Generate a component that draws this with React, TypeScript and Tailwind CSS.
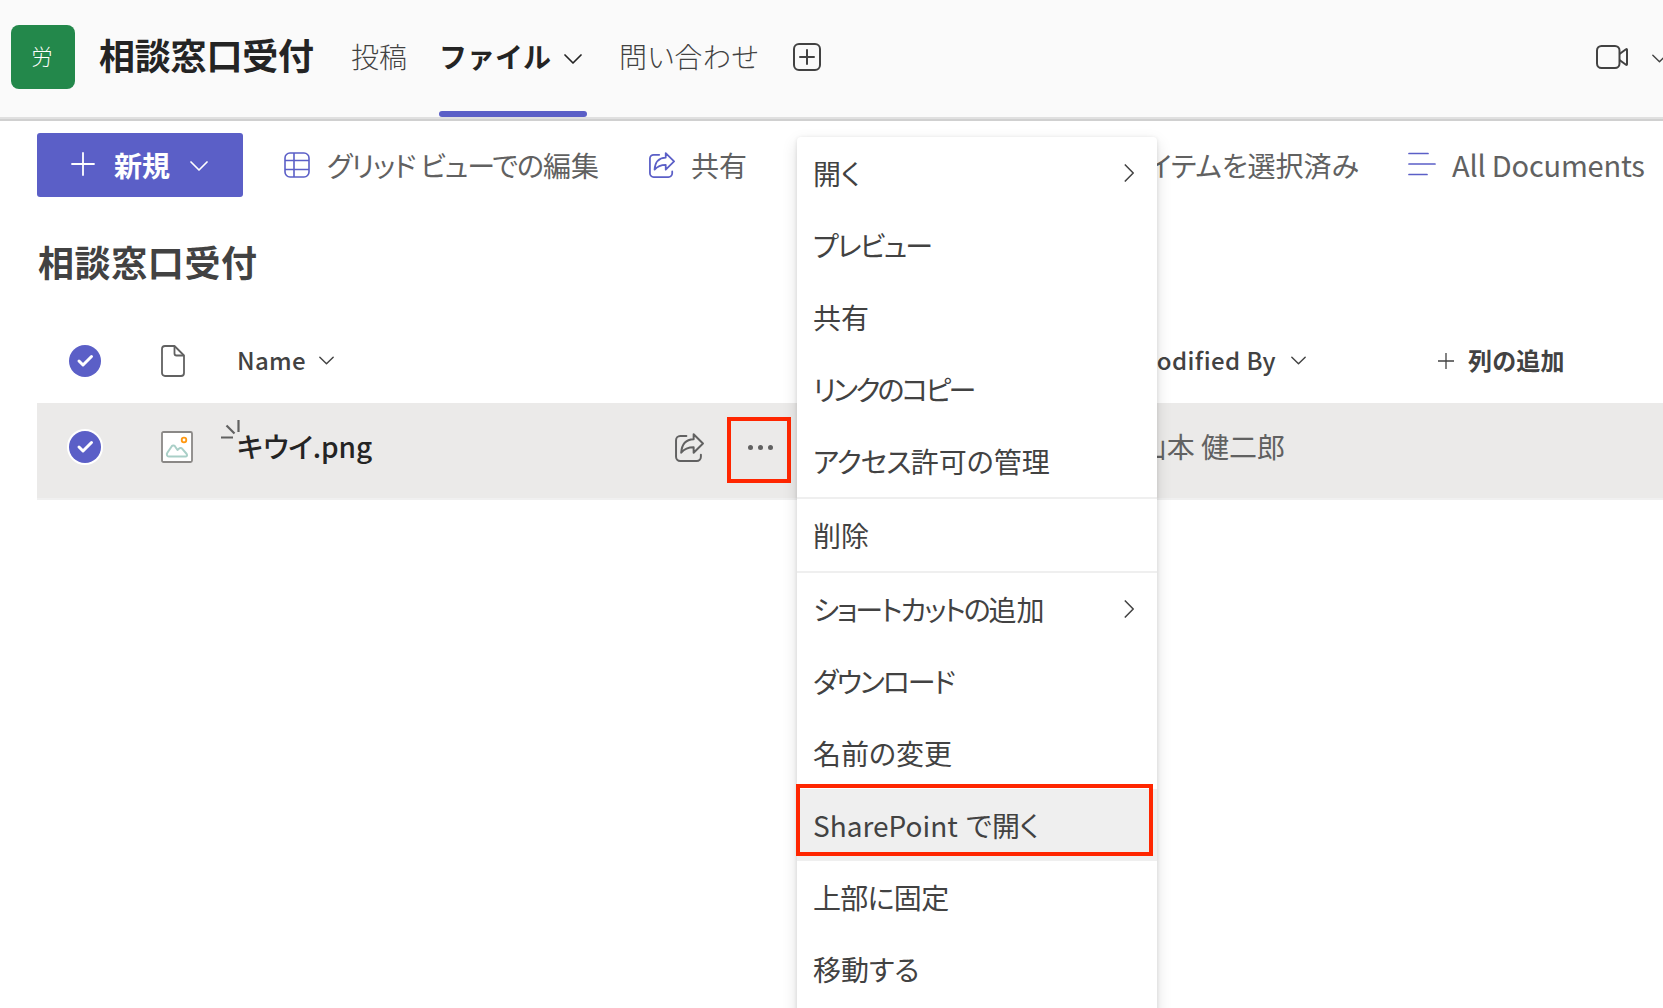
import React from 'react';

interface IconProps {
  className?: string;
}

const ChevronDown: React.FC<IconProps> = ({ className = '' }) => (
  <svg viewBox="0 0 18 10" fill="none" stroke="currentColor" className={className}>
    <path d="M1 1l8 8 8-8" strokeWidth={1.7} strokeLinecap="round" strokeLinejoin="round" />
  </svg>
);

const ShareIcon: React.FC<IconProps> = ({ className = '' }) => (
  <svg
    viewBox="0 0 28 28"
    fill="none"
    stroke="currentColor"
    strokeWidth={1.9}
    strokeLinecap="round"
    strokeLinejoin="round"
    className={className}
  >
    <path d="M11 3H5a4 4 0 0 0-4 4v16a4 4 0 0 0 4 4h16a4 4 0 0 0 4-4v-2" />
    <path d="M18 1.200v4.800C11 6.300 6.500 10.500 6 19c3.500-4.200 7-5.200 12-5.200v5.200l9-8.900z" />
  </svg>
);

const CheckCircle: React.FC<{ ring?: boolean }> = ({ ring }) => (
  <svg viewBox="0 0 36 36" className="w-9 h-9">
    {ring && <circle cx="18" cy="18" r="18" fill="#fff" />}
    <circle cx="18" cy="18" r="16" fill="#5b5fc7" />
    <path d="M12 18l4 4 8.500-8.500" fill="none" stroke="#fff" strokeWidth={3} strokeLinecap="round" strokeLinejoin="round" />
  </svg>
);

interface MenuItemProps {
  children: React.ReactNode;
  submenu?: boolean;
  active?: boolean;
}

const MenuItem: React.FC<MenuItemProps> = ({ children, submenu, active }) => (
  <div className={`flex items-center justify-between h-[72px] pl-4 pr-[23px] ${active ? 'bg-[#efefef]' : ''}`}>
    <span className="text-[28px] leading-9 whitespace-nowrap">{children}</span>
    {submenu && (
      <svg viewBox="0 0 10 18" fill="none" stroke="currentColor" strokeWidth={1.5} className="w-[10px] h-[18px]">
        <path d="M.8.500L9.200 9 .8 17.500" />
      </svg>
    )}
  </div>
);

const Divider = () => <div className="h-0.5 bg-[#efefef]" />;

export default function App() {
  return (
    <div className="relative w-[1663px] h-[1008px] overflow-hidden bg-white text-[#424242] font-['Noto_Sans_CJK_JP',sans-serif] [font-feature-settings:'palt']">
      {/* Channel header */}
      <header className="flex items-center h-[121px] bg-[#fafafa] pl-[11px] border-b-2 border-[#d0d0d0] shadow-[inset_0_-2px_0_#e0e0e0] [&>*]:shrink-0">
        <div className="flex items-center justify-center w-16 h-16 mb-[5px] pb-[2px] pr-[2px] rounded-lg bg-[#23884b] text-white text-[21px] font-light">
          労
        </div>
        <h1 className="w-[252px] ml-6 mb-[11px] text-[36px] leading-[48px] font-bold tracking-[-0.2px] text-[#242424] whitespace-nowrap">相談窓口受付</h1>
        <span className="w-[88px] mb-[7px] text-[28px] leading-9 font-light whitespace-nowrap">投稿</span>
        <div className="relative flex items-center justify-between w-[148px] h-[119px] pb-[5px] pr-[5px] text-[#242424]">
          <span className="mb-[2px] text-[28px] leading-9 font-bold whitespace-nowrap [font-feature-settings:normal]">ファイル</span>
          <ChevronDown className="w-[18px] h-[10px] mt-[3px]" />
          <div className="absolute left-0 bottom-[2px] w-full h-[6px] rounded-full bg-[#5b5fc7]" />
        </div>
        <span className="w-[174px] ml-8 mb-[7px] text-[28px] leading-9 font-light tracking-[0.4px] whitespace-nowrap">問い合わせ</span>
        <svg viewBox="0 0 28 28" fill="none" stroke="currentColor" strokeWidth={2} strokeLinecap="round" className="w-7 h-7 mb-[5px]">
          <rect x="1" y="1" width="26" height="26" rx="5" />
          <path d="M14 7v14M7 14h14" />
        </svg>
        <svg viewBox="0 0 32 24" fill="none" stroke="currentColor" strokeWidth={2} strokeLinejoin="round" className="w-8 h-6 ml-[775px] mb-[5px]">
          <rect x="1" y="1" width="22.500" height="22" rx="4.500" />
          <path d="M23.500 9L30 4.200c.5-.4 1-.2 1 .5v14.600c0 .7-.5.900-1 .5L23.500 15" />
        </svg>
        <ChevronDown className="w-[15px] h-[9px] ml-6 mb-[2px]" />
      </header>

      {/* Command bar */}
      <div className="flex items-center h-16 mt-3 pl-[37px] text-[28px] leading-9 text-[#616161] whitespace-nowrap [&>*]:shrink-0">
        <button className="flex items-center w-[206px] h-16 rounded-[3px] bg-[#5b5fc7] text-white font-bold pl-[34px]">
          <svg viewBox="0 0 24 24" stroke="currentColor" strokeWidth={1.8} strokeLinecap="round" className="w-6 h-6 mb-[2px]">
            <path d="M12 1v22M1 12h22" />
          </svg>
          <span className="w-[76px] ml-[19px] text-left">新規</span>
          <ChevronDown className="w-[18px] h-[10px] mt-[2px]" />
        </button>
        <svg viewBox="0 0 26 26" fill="none" stroke="#5b5fc7" strokeWidth={1.6} className="w-[26px] h-[26px] ml-[41px]">
          <rect x="1" y="1" width="24" height="24" rx="5" />
          <path d="M10 1v24M1 8.500h24M1 17.500h24" />
        </svg>
        <span className="w-[322px] ml-[17px]">
          <span className="tracking-[-1.1px]">グリッド ビューでの</span>編集
        </span>
        <ShareIcon className="w-[26px] h-[26px] text-[#5b5fc7]" />
        <span className="ml-4 w-[60px]">共有</span>
        <span className="w-[608px] text-right">1 個のアイテムを選択済み</span>
        <svg viewBox="0 0 28 24" stroke="#5b5fc7" strokeWidth={1.7} strokeLinecap="round" className="w-7 h-6 ml-[49px] mb-[3px]">
          <path d="M1 1.500h19M1 12h26M1 22.500h18" />
        </svg>
        <span className="ml-4 mb-[3px] text-[29px] tracking-[-0.2px]">All Documents</span>
      </div>

      <h2 className="mt-[40px] ml-[38px] text-[36px] leading-[48px] font-bold tracking-[0.6px]">相談窓口受付</h2>

      {/* File list */}
      <div className="ml-[37px] mt-[34px] whitespace-nowrap">
        <div className="flex items-center h-[84px] pb-px pl-[30px] text-[24px] leading-8 font-medium [&>*]:shrink-0">
          <CheckCircle />
          <svg viewBox="0 0 24 32" fill="none" stroke="#616161" strokeWidth={1.8} strokeLinejoin="round" className="w-6 h-8 ml-[58px]">
            <path d="M4 1h9.500L23 10.500V28a3 3 0 0 1-3 3H4a3 3 0 0 1-3-3V4a3 3 0 0 1 3-3z" />
            <path d="M13.500 1v7.500a2 2 0 0 0 2 2H23" />
          </svg>
          <span className="w-[82px] ml-[52px] mb-px tracking-[0.3px]">Name</span>
          <ChevronDown className="w-[15px] h-[9px]" />
          <span className="w-[942px] mb-px text-right tracking-[0.45px]">Modified By</span>
          <ChevronDown className="w-[15px] h-[9px] ml-[15px]" />
          <svg viewBox="0 0 16 16" stroke="currentColor" strokeWidth={1.3} className="w-4 h-4 ml-[132px]">
            <path d="M8 0v16M0 8h16" />
          </svg>
          <span className="ml-[14px] mb-px font-bold tracking-[0.3px]">列の追加</span>
        </div>
        <div className="relative flex items-center h-[97px] pl-[30px] pb-[8px] bg-[#ebeae9] border-b-2 border-[#f0f0f0] text-[28px] leading-9 [&>*]:shrink-0">
          <CheckCircle ring />
          <svg viewBox="0 0 32 32" fill="none" className="w-8 h-8 ml-[58px]">
            <rect x="1" y="1" width="30" height="30" rx="1.500" fill="#fff" stroke="#8a8886" strokeWidth={1.8} />
            <circle cx="23" cy="9" r="2.300" stroke="#ff9810" strokeWidth={1.8} />
            <path d="M6.500 21.500l4.300-6.300c.8-1.100 2.300-1.100 3.100 0l2.600 3.800 1.600-1.500c.9-.9 2.300-.7 3 .2l4.600 5.300c.9 1.200.1 2.500-1.200 2.500H7.800c-1.700 0-2.700-2-1.300-4z" stroke="#a9cfc7" strokeWidth={2} strokeLinejoin="round" />
          </svg>
          <span className="w-[438px] ml-11 mb-px font-medium tracking-[-0.1px] text-[#242424]">キウイ.png</span>
          <ShareIcon className="w-[29px] h-[29px] mt-[2px] text-[#616161]" />
          <div className="flex items-center justify-center gap-[5px] w-16 h-[66px] ml-[23px] mt-[6px] pb-1 pl-[3px] border-4 border-[#ff2600]">
            <i className="w-[5px] h-[5px] rounded-full bg-[#616161]" />
            <i className="w-[5px] h-[5px] rounded-full bg-[#616161]" />
            <i className="w-[5px] h-[5px] rounded-full bg-[#616161]" />
          </div>
          <span className="w-[494px] mb-px text-right text-[#616161]">山本 健二郎</span>
          {/* "new" sparkle at the corner of the file name */}
          <svg viewBox="0 0 20 20" stroke="#616161" strokeWidth={2.200} className="absolute left-[184px] top-[17px] w-5 h-5">
            <path d="M17.500 0v12M5.500 5.500l8 8M0 17.500h12" />
          </svg>
        </div>
      </div>

      {/* Context menu */}
      <div className="absolute left-[797px] top-[137px] w-[360px] h-[900px] rounded-[4px] bg-white shadow-[0_6px_16px_rgba(0,0,0,0.13),0_1px_4px_rgba(0,0,0,0.11)]">
        <MenuItem submenu>開く</MenuItem>
        <MenuItem>
          <span className="tracking-[-1.8px]">プレビュー</span>
        </MenuItem>
        <MenuItem>共有</MenuItem>
        <MenuItem>
          <span className="tracking-[-2.8px]">リンクのコピー</span>
        </MenuItem>
        <MenuItem>
          <span className="tracking-[-1px]">アクセス</span>許可の管理
        </MenuItem>
        <Divider />
        <MenuItem>削除</MenuItem>
        <Divider />
        <MenuItem submenu>
          <span className="tracking-[-2.1px]">ショートカットの</span>追加
        </MenuItem>
        <MenuItem>
          <span className="tracking-[-2px]">ダウンロード</span>
        </MenuItem>
        <MenuItem>名前の変更</MenuItem>
        <MenuItem active>
          SharePoint<span className="ml-[2px]"> で開く</span>
        </MenuItem>
        <MenuItem>
          <span className="tracking-[-0.7px]">上部に固定</span>
        </MenuItem>
        <MenuItem>移動する</MenuItem>
        <div className="absolute -left-px top-[647px] w-[357px] h-[72px] border-4 border-[#ff2600]" />
      </div>
    </div>
  );
}
